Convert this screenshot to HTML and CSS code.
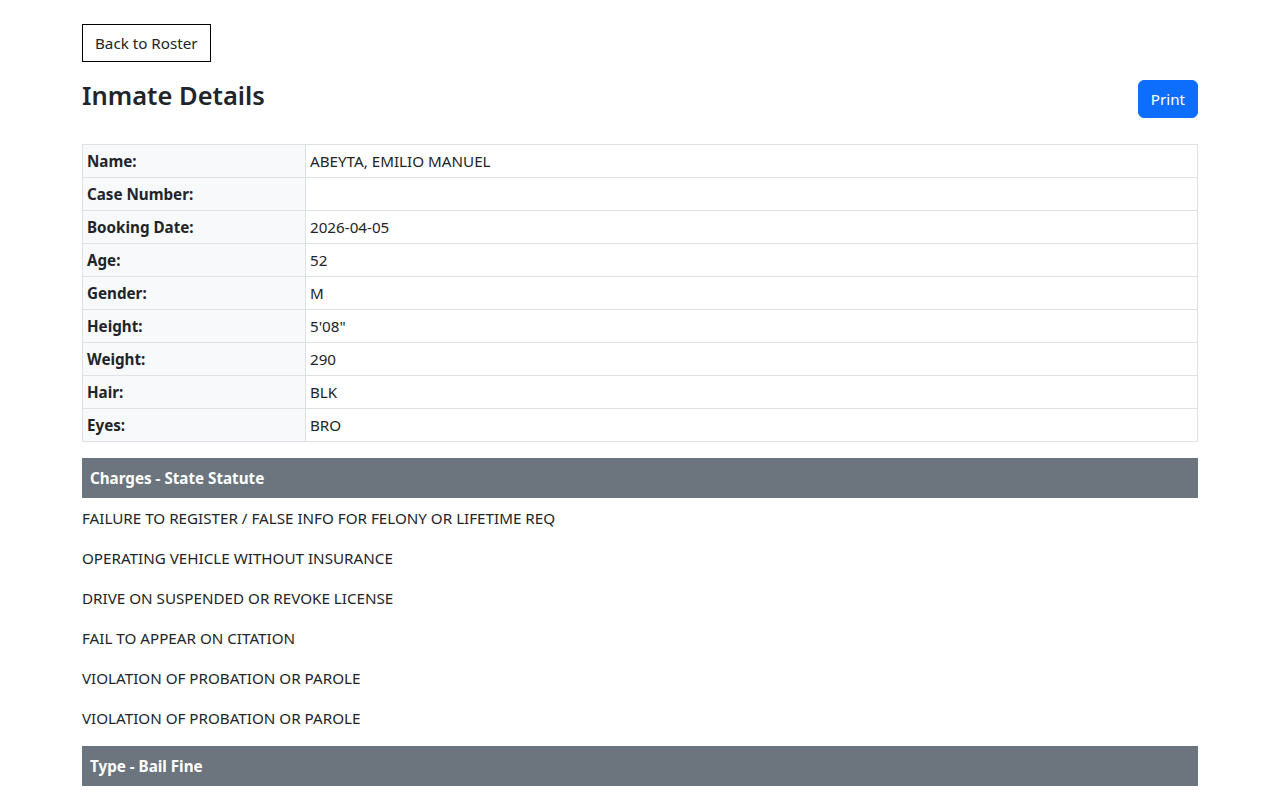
FILE: index.html
```html
<!DOCTYPE html>
<html lang="en">
<head>
    <meta charset="UTF-8">
    <meta name="viewport" content="width=device-width, initial-scale=1.0">
    <title>Inmate Details</title>
    <link rel="stylesheet" href="styles.css">
</head>
<body>

    <div class="container">
        <a class="btn btn-back" href="#">Back to Roster</a>

        <div class="title-row">
            <h2>Inmate Details</h2>
            <button class="btn btn-print">Print</button>
        </div>

        <!-- Datos del interno -->
        <table class="details">
            <tr><th>Name:</th><td>ABEYTA, EMILIO MANUEL</td></tr>
            <tr><th>Case Number:</th><td></td></tr>
            <tr><th>Booking Date:</th><td>2026-04-05</td></tr>
            <tr><th>Age:</th><td>52</td></tr>
            <tr><th>Gender:</th><td>M</td></tr>
            <tr><th>Height:</th><td>5'08"</td></tr>
            <tr><th>Weight:</th><td>290</td></tr>
            <tr><th>Hair:</th><td>BLK</td></tr>
            <tr><th>Eyes:</th><td>BRO</td></tr>
        </table>

        <div class="section-header">Charges - State Statute</div>
        <div class="charges">
            <div class="charge">FAILURE TO REGISTER / FALSE INFO FOR FELONY OR LIFETIME REQ</div>
            <div class="charge">OPERATING VEHICLE WITHOUT INSURANCE</div>
            <div class="charge">DRIVE ON SUSPENDED OR REVOKE LICENSE</div>
            <div class="charge">FAIL TO APPEAR ON CITATION</div>
            <div class="charge">VIOLATION OF PROBATION OR PAROLE</div>
            <div class="charge">VIOLATION OF PROBATION OR PAROLE</div>
        </div>

        <div class="section-header">Type - Bail Fine</div>
    </div>

</body>
</html>
```

FILE: styles.css
```css
body {
    margin: 0;
    font-family: "Noto Sans", "Open Sans", sans-serif;
    font-size: 15.2px;
    line-height: 24px;
    color: #212529;
    background-color: #fff;
}

.container {
    width: 1116px;
    margin: 0 auto;
    padding: 24px 12px 0;
}

.btn {
    display: inline-block;
    padding: 6px 12px;
    font-family: inherit;
    font-size: 15.2px;
    line-height: 24px;
    text-decoration: none;
    cursor: pointer;
}

.btn-back {
    color: #212529;
    border: 1px solid #000;
    background: #fff;
}

.title-row {
    display: flex;
    justify-content: space-between;
    align-items: center;
    margin-top: 17px;
    margin-bottom: 26px;
}

.title-row h2 {
    margin: 0 0 6px;
    font-size: 25.5px;
    font-weight: 600;
    line-height: 1.3;
}

.btn-print {
    color: #fff;
    background-color: #0d6efd;
    border: 1px solid #0d6efd;
    border-radius: 6px;
}

/* Tabla de datos */
.details {
    width: 100%;
    border-collapse: collapse;
    margin-bottom: 16px;
}

.details th,
.details td {
    border: 1px solid #dee2e6;
    padding: 4px;
    height: 24px;
    text-align: left;
    vertical-align: top;
}

.details th {
    width: 20%;
    background-color: #f8f9fa;
    font-weight: 700;
}

.section-header {
    padding: 8px;
    background-color: #6c757d;
    color: #fff;
    font-weight: 700;
}

.charges {
    margin-bottom: 8px;
}

.charge {
    padding: 8px 0;
}
```
